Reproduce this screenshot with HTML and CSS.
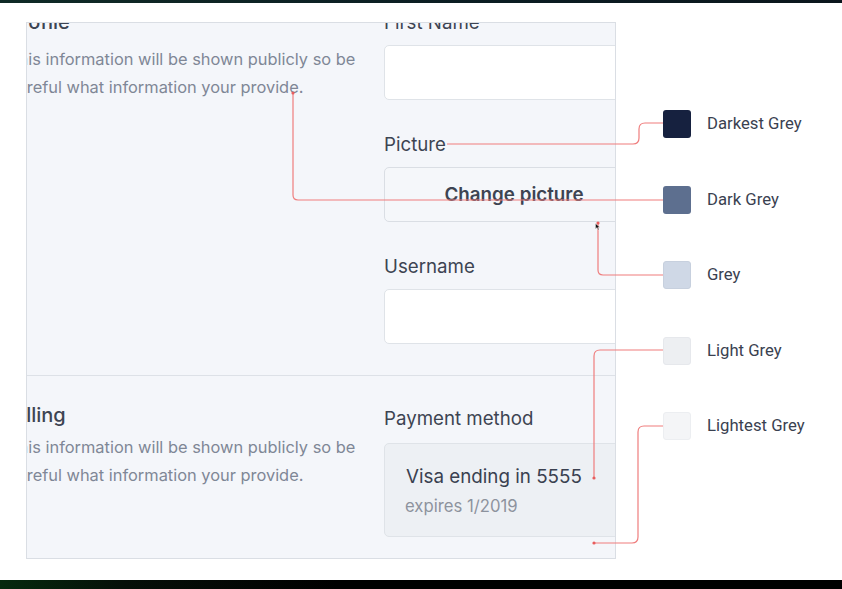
FILE: index.html
```html
<!DOCTYPE html>
<html lang="en">
<head>
<meta charset="utf-8">
<title>Greys</title>
<link rel="stylesheet" href="styles.css">
</head>
<body>
<div class="screen">
  <div class="topbar"></div>
  <div class="stage">
    <div class="panel">
      <div class="sheet">
        <section class="section">
          <div class="intro">
            <h2 class="heading">Profile</h2>
            <p class="desc desc-profile">This information will be shown publicly so be careful what information your provide.</p>
          </div>
          <div class="fields">
            <div class="field">
              <label class="label">First Name</label>
              <div class="input"></div>
            </div>
            <div class="field">
              <label class="label">Picture</label>
              <div class="picture">Change picture</div>
            </div>
            <div class="field">
              <label class="label">Username</label>
              <div class="input"></div>
            </div>
          </div>
        </section>
        <section class="section section-billing">
          <div class="intro">
            <h2 class="heading">Billing</h2>
            <p class="desc desc-billing">This information will be shown publicly so be careful what information your provide.</p>
          </div>
          <div class="fields">
            <div class="field">
              <label class="label">Payment method</label>
              <div class="card">
                <div class="card-title">Visa ending in 5555</div>
                <div class="card-sub">expires 1/2019</div>
              </div>
            </div>
          </div>
        </section>
      </div>
    </div>
    <ul class="legend">
      <li class="legend-item"><span class="swatch sw-darkest"></span><span class="legend-label">Darkest Grey</span></li>
      <li class="legend-item"><span class="swatch sw-dark"></span><span class="legend-label">Dark Grey</span></li>
      <li class="legend-item"><span class="swatch sw-grey"></span><span class="legend-label">Grey</span></li>
      <li class="legend-item"><span class="swatch sw-light"></span><span class="legend-label">Light Grey</span></li>
      <li class="legend-item"><span class="swatch sw-lightest"></span><span class="legend-label">Lightest Grey</span></li>
    </ul>
  </div>
  <div class="bottombar"></div>
  <svg class="connectors" width="842" height="589" viewBox="0 0 842 589" aria-hidden="true">
    <g fill="none" stroke="#ef7d7d" stroke-width="1.2">
      <path d="M447 144 H633 Q639 144 639 138 V129 Q639 123 645 123 H663"/>
      <path d="M293 93 V195 Q293 200 298 200 H663"/>
      <path d="M598 223 V270 Q598 275 603 275 H663"/>
      <path d="M594 478 V356 Q594 350 600 350 H663"/>
      <path d="M594 543 H632 Q638 543 638 537 V432 Q638 426 644 426 H663"/>
    </g>
    <g fill="#e85d5d">
      <circle cx="293" cy="93" r="1.6"/>
      <circle cx="598" cy="223" r="1.6"/>
      <circle cx="594" cy="478" r="1.6"/>
      <circle cx="594" cy="543" r="1.6"/>
    </g>
    <path d="M595.5 223.5 L595.5 229 L597 227.6 L598.2 230 L599 229.6 L597.9 227.3 L599.8 227.2 Z" fill="#111" stroke="#fff" stroke-width="0.4"/>
  </svg>
</div>
</body>
</html>
```

FILE: styles.css
```css
* {
  box-sizing: border-box;
}

html, body {
  margin: 0;
  padding: 0;
  background: #ffffff;
}

.screen {
  position: relative;
  width: 842px;
  height: 589px;
  overflow: hidden;
  background: #ffffff;
  font-family: Inter, "Noto Sans", sans-serif;
}

.topbar {
  height: 3px;
  background: linear-gradient(90deg, #0f2a26 0%, #0b1c22 60%, #0a161c 100%);
}

.stage {
  height: 577px;
  display: flex;
  align-items: flex-start;
}

.panel {
  margin: 19px 0 0 26px;
  width: 590px;
  height: 537px;
  border: 1px solid #dadee4;
  background: #f4f6fa;
  overflow: hidden;
  flex: none;
}

.sheet {
  width: 636px;
  margin: -41px 0 0 -19px;
}

.section {
  display: grid;
  grid-template-columns: 376px 260px;
  padding: 28px 0 31px;
}

.section-billing {
  border-top: 1px solid #dde1e7;
}

.heading {
  margin: 0;
  font-size: 20px;
  line-height: 24px;
  font-weight: 500;
  color: #3d4452;
}

.section-billing .heading {
  font-weight: 450;
  margin-top: -1px;
}

.desc {
  margin: 7px 0 0;
  width: 356px;
  font-size: 16.4px;
  line-height: 28px;
  color: #7f8796;
}

.desc-profile {
  margin-top: 11px;
}

.desc-billing {
  margin-top: 6px;
}

.fields {
  display: flex;
  flex-direction: column;
  gap: 32px;
}

.field {
  display: flex;
  flex-direction: column;
}

.label {
  font-size: 18.7px;
  line-height: 24px;
  color: #3d4452;
  padding-top: 1px;
  margin-bottom: 10px;
}

.section-billing .label {
  padding-top: 3px;
  margin-bottom: 12px;
}

.input {
  height: 55px;
  background: #ffffff;
  border: 1px solid #dfe3e8;
  border-radius: 5px;
}

.picture {
  height: 55px;
  border: 1px solid #dadee4;
  border-radius: 5px;
  background: #f5f7fa;
  display: flex;
  align-items: center;
  justify-content: center;
  font-size: 18.8px;
  font-weight: 600;
  color: #3d4452;
}

.card {
  height: 94px;
  border: 1px solid #dfe3e8;
  border-radius: 5px;
  background: #edf0f4;
  padding: 19px 20px 0 20px;
}

.card-title {
  font-size: 18.8px;
  line-height: 28px;
  color: #3a4150;
  padding-left: 1px;
}

.card-sub {
  font-size: 16.7px;
  line-height: 28px;
  margin-top: 1px;
  color: #8d939e;
}

.legend {
  list-style: none;
  margin: 107px 0 0 47px;
  padding: 0;
  display: flex;
  flex-direction: column;
  gap: 47.6px;
}

.legend-item {
  display: flex;
  align-items: center;
  gap: 16px;
  height: 28px;
}

.swatch {
  width: 28px;
  height: 28px;
  border-radius: 3px;
  flex: none;
}

.sw-darkest { background: #16213f; }
.sw-dark { background: #5d6f8f; }
.sw-grey { background: #cfd8e6; border: 1px solid #c7d0de; }
.sw-light { background: #edeff2; border: 1px solid #e6e8ec; }
.sw-lightest { background: #f4f5f7; border: 1px solid #eceef1; }

.legend-label {
  font-family: Roboto, "Noto Sans", sans-serif;
  font-size: 16.7px;
  line-height: 20px;
  color: #3a4150;
}

.bottombar {
  position: absolute;
  left: 0;
  bottom: 0;
  width: 842px;
  height: 9px;
  background: linear-gradient(90deg, #062a0e 0%, #050f08 15%, #000000 40%, #000000 100%);
}

.connectors {
  position: absolute;
  left: 0;
  top: 0;
  pointer-events: none;
}
```
